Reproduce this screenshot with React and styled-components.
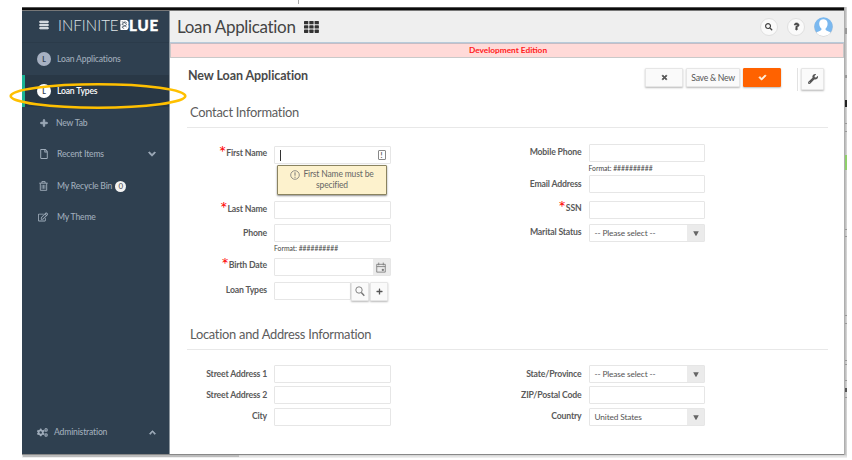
import React from "react";
import styled, { createGlobalStyle } from "styled-components";
import {
  FaBars, FaSearch, FaQuestion, FaTimes, FaCheck, FaWrench, FaPlus,
  FaChevronDown, FaChevronUp, FaRegFile, FaRegEdit, FaCogs,
} from "react-icons/fa";

const Global = createGlobalStyle`
  * { box-sizing: border-box; }
  body { margin: 0; background: #fff; font-family: Lato, sans-serif; color: #555; overflow: hidden; }
  svg { display: block; flex: none; overflow: visible; }
`;

const Page = styled.div`
  position: relative;
  width: 852px;
  height: 460px;
  padding: 7px 0 0 22px;
`;
const Backdrop = styled.div`
  position: absolute;
  left: 298px;
  top: 0;
  width: 1px;
  height: 4px;
  background: #aaa;
`;
const BackEdge = styled.div`
  position: absolute;
  left: 844px;
  top: 7px;
  width: 3px;
  height: 450px;
  background: linear-gradient(90deg, #a5a5a5, #dcdcdc);
  border-bottom: 2px solid #ddd;
  overflow: hidden;
`;
const Peek = styled.div`
  position: absolute;
  left: 1px;
  top: ${(p) => p.$y}px;
  width: 2px;
  height: ${(p) => p.$h || 1}px;
  background: ${(p) => p.$c || "#999"};
`;
const BackFloor = styled.div`
  position: absolute;
  left: 22px;
  top: 455px;
  width: 825px;
  height: 3px;
  background: linear-gradient(#d2d2d2, #f4f4f4);
  &::before {
    content: "";
    display: block;
    margin-left: 1px;
    width: 216px;
    height: 2px;
    background: #bcbcbc;
  }
`;
const Window = styled.div`
  position: relative;
  width: 822px;
  height: 448px;
  display: flex;
  flex-direction: column;
  border-bottom: 1px solid #888;
  background: #fff;
`;
const TopEdge = styled.div`
  height: 4px;
  background: #0b0b0b;
  border-top: 1px solid #555;
  border-bottom: 1px solid #777;
`;
const Columns = styled.div`
  display: flex;
  flex: 1;
`;

const Sidebar = styled.nav`
  width: 148px;
  display: flex;
  flex-direction: column;
  background: #2f4050;
  border-right: 1px solid #8d979f;
`;
const Brand = styled.div`
  height: 32px;
  display: flex;
  align-items: center;
  padding: 0 0 3px 17px;
  color: #dfe4e8;
  border-bottom: 1px solid #2b3b4a;
`;
const BrandLight = styled.span`
  margin-left: 9px;
  width: 61.5px;
  font-size: 15px;
  line-height: 18px;
  font-weight: 300;
  letter-spacing: 0.05px;
`;
const BrandHeavy = styled.span`
  margin-left: 0.5px;
  font-size: 15px;
  line-height: 18px;
  font-weight: 900;
  color: #fff;
  letter-spacing: 0.9px;
  -webkit-text-stroke: 0.4px #fff;
`;
const NavItem = styled.div`
  height: ${(p) => p.$h}px;
  display: flex;
  align-items: center;
  padding-left: ${(p) => (p.$active ? 12 : 15)}px;
  border-left: ${(p) => (p.$active ? "3px solid #1ab394" : "0")};
  background: ${(p) => (p.$active ? "#293846" : "transparent")};
  color: ${(p) => (p.$active ? "#fff" : "#a0adbb")};
  font-size: 8.6px;
  font-weight: ${(p) => (p.$active ? 600 : 500)};
  letter-spacing: -0.18px;
  margin-top: ${(p) => p.$mt || 0};
`;
const NavIcon = styled.span`
  width: ${(p) => p.$w || 20}px;
  display: flex;
  padding-left: ${(p) => p.$pad || 0}px;
`;
const Initial = styled.span`
  width: 14px;
  height: 14px;
  border-radius: 50%;
  display: grid;
  place-items: center;
  background: ${(p) => (p.$active ? "#fff" : "#a7b1c2")};
  color: #2f4050;
  font-size: 7px;
  line-height: 8px;
  font-weight: 700;
`;
const Count = styled.span`
  width: 11px;
  height: 11px;
  border-radius: 50%;
  margin-left: 3px;
  background: #f3f3f3;
  color: #5e5e5e;
  font-size: 8px;
  line-height: 11px;
  text-align: center;
`;
const Arrow = styled.span`
  margin-left: auto;
  padding-right: 13px;
`;

const Main = styled.main`
  flex: 1;
  display: flex;
  flex-direction: column;
  min-width: 0;
`;
const Header = styled.header`
  height: 32px;
  flex: none;
  display: flex;
  align-items: center;
  padding: 0 11px 0 7px;
  background: #efefef;
  border-bottom: 1px solid #b8cbda;
`;
const Title = styled.h1`
  margin: 0 8.5px 0 0;
  font-size: 17px;
  line-height: 22px;
  font-weight: 400;
  letter-spacing: -0.33px;
  color: #444;
  white-space: nowrap;
`;
const Tools = styled.div`
  margin-left: auto;
  display: flex;
  align-items: center;
  gap: 9px;
`;
const RoundButton = styled.span`
  width: 18px;
  height: 18px;
  display: grid;
  place-items: center;
  border-radius: 50%;
  background: #fafafa;
  border: 1px solid #e0e0e0;
  color: #444;
`;
const Edition = styled.div`
  height: 15px;
  flex: none;
  padding-left: 2px;
  background: #ffdad8;
  border: 1px solid #c9c9c9;
  border-top-color: #c5bcc4;
  color: #ff2020;
  font-size: 8.3px;
  line-height: 12px;
  font-weight: 700;
  text-align: center;
`;
const Content = styled.div`
  flex: 1;
  padding: 0 16px 0 17px;
`;
const ActionBar = styled.div`
  height: 43px;
  display: flex;
  align-items: flex-start;
  padding: 10px 4px 0 1px;
`;
const FormTitle = styled.h2`
  margin: 0 auto 0 0;
  font-size: 12.5px;
  line-height: 16px;
  font-weight: 700;
  letter-spacing: -0.08px;
  color: #4a4a4a;
`;
const Button = styled.button`
  width: ${(p) => p.$w}px;
  height: ${(p) => p.$h || 19}px;
  margin-left: ${(p) => p.$ml || 0}px;
  padding: 0;
  display: flex;
  align-items: center;
  justify-content: center;
  font: 8.7px/12px Lato, sans-serif;
  letter-spacing: -0.3px;
  white-space: nowrap;
  background: ${(p) => (p.$primary ? "#ff6200" : "#fafafa")};
  color: ${(p) => (p.$primary ? "#fff0dd" : "#555")};
  border: 1px solid ${(p) => (p.$primary ? "#ff6200" : "#e6e6e6")};
  border-radius: 1px;
  box-shadow: 0 1px 2px rgba(0, 0, 0, 0.28);
`;
const Divider = styled.span`
  width: 1px;
  height: 23px;
  margin-left: 16px;
  background: #e2e2e2;
`;
const SectionTitle = styled.h3`
  margin: 0;
  height: ${(p) => p.$h}px;
  padding: ${(p) => p.$pt}px 0 0 3px;
  font-size: 12.9px;
  line-height: 16px;
  font-weight: 400;
  letter-spacing: -0.27px;
  color: #5c5c5c;
  border-bottom: 1px solid #e8e8e8;
`;
const Fields = styled.div`
  display: grid;
  grid-template-columns: 314.5px 1fr;
  height: ${(p) => p.$h}px;
`;
const FieldColumn = styled.div`
  padding-top: ${(p) => p.$pt}px;
`;
const Row = styled.div`
  position: relative;
  height: 18px;
  margin-top: ${(p) => p.$gap || 0}px;
  display: flex;
`;
const Label = styled.label`
  width: 80px;
  margin-right: 7px;
  display: flex;
  justify-content: flex-end;
  font-size: 8.7px;
  line-height: 12px;
  letter-spacing: -0.17px;
  padding-top: ${(p) => p.$pt ?? 3}px;
  font-weight: 700;
  color: #5a5a5a;
  white-space: nowrap;
`;
const Star = styled.span`
  color: #f00;
  font-size: 18px;
  line-height: 16px;
  font-weight: 400;
  margin: -3px 0 0;
`;
const Box = styled.div`
  width: ${(p) => p.$w || 116.5}px;
  height: 18px;
  display: flex;
  align-items: center;
  justify-content: space-between;
  padding-left: 5px;
  border: 1px solid #e6e6e6;
  border-radius: 1px;
  background: #fff;
  font-size: 8.3px;
  letter-spacing: -0.13px;
  color: #555;
`;
const Caret = styled.span`
  width: 1px;
  height: 11px;
  background: #333;
`;
const Badge = styled.span`
  width: 8px;
  height: 10px;
  margin-right: 4px;
  display: grid;
  place-items: center;
  border: 1px solid #888;
  border-radius: 1px;
  font-size: 7px;
  line-height: 8px;
  font-weight: 700;
`;
const Addon = styled.span`
  width: 17px;
  height: 16px;
  display: grid;
  place-items: center;
  background: #ebebeb;
  color: #666;
`;
const Hint = styled.div`
  height: 8px;
  margin: 2px 0 0 87px;
  font-size: 6.8px;
  line-height: 8px;
  color: #444;
`;
const Warning = styled.div`
  position: absolute;
  left: 90px;
  top: 18.5px;
  width: 110px;
  height: 30px;
  padding-top: 4px;
  border: 1px solid #8a8360;
  border-radius: 1px;
  background: #fdf2cd;
  box-shadow: 0 1px 2px rgba(0, 0, 0, 0.45);
  font-size: 8.5px;
  line-height: 10.5px;
  letter-spacing: -0.15px;
  text-align: center;
  color: #666;
`;
const WarningLine = styled.div`
  display: flex;
  justify-content: center;
  align-items: center;
  gap: 3px;
  height: 10px;
`;
const Highlight = styled.svg`
  position: absolute;
  left: 9px;
  top: 82px;
`;

const KnotMark = () => (
  <svg width="9" height="10" viewBox="0 0 9 10">
    <path d="M.5 0h6Q9.4 1 8.4 4.8 9.4 8 7 10H.5Q-.2 7 .6 5Q-.2 3 .5 0Z" fill="#fff" />
    <path d="M1.8 1.8Q4 2 6.6 4.1M4.6 1.4l2.2 1.4M1.8 4.4Q4 5 6.6 7M1.8 7.2l2.4 1.4M2 7Q4.5 6.5 6.8 4.5M1.8 4.2L5 2" stroke="#2f4050" strokeWidth=".7" fill="none" />
  </svg>
);
const GridMark = () => (
  <svg width="15" height="12" viewBox="0 0 15 12" fill="#333">
    {[0, 4.3, 8.6].map((y) => [0, 5.3, 10.6].map((x) => (
      <rect key={`${x}-${y}`} x={x} y={y} width="4.3" height="3.3" rx=".6" />
    )))}
  </svg>
);
const Bin = () => (
  <svg width="9" height="10" viewBox="0 0 9 10" fill="none" stroke="currentColor">
    <path d="M.3 2.2h8.4M2.9 2V.6h3.2V2M1.3 2.4v6.9h6.4V2.4" strokeWidth=".95" />
    <path d="M3.1 3.8v4M4.5 3.8v4M5.9 3.8v4" strokeWidth=".8" />
  </svg>
);
const Avatar = () => (
  <svg width="19" height="20" viewBox="0 0 19 20">
    <circle cx="9.5" cy="10.2" r="9.3" fill="#c9c9c9" />
    <circle cx="9.5" cy="9.4" r="9.2" fill="#7ab8ef" />
    <path d="M5.2 6.4C5 .7 13.8.7 13.6 6.4c0 2.5-1 4-2 5.2-.3 1.4.2 1.8 1.8 2.4 1.7.5 2.6 1.1 3.1 1.7a9.2 9.2 0 0 1-14 0c.5-.7 1.6-1.2 3.2-1.7 1.5-.6 2-1 1.7-2.4-1.2-1.2-2.2-2.7-2.2-5.2Z" fill="#fff" />
  </svg>
);
const Calendar = () => (
  <svg width="10" height="11" viewBox="0 0 11 12" fill="none" stroke="#777" strokeWidth=".9">
    <path d="M.8 2.5h9.4v8.6H.8zM.8 5h9.4M3 .6v3M8 .6v3" />
    <path d="M6.8 8h1.4v1.2H6.8z" fill="#555" />
  </svg>
);
const Lens = () => (
  <svg width="10" height="11" viewBox="0 0 10 11" fill="none" stroke="#777">
    <circle cx="4" cy="4" r="3.2" strokeWidth=".9" />
    <path d="M6.3 6.5l3 3.3" strokeWidth="1.4" />
  </svg>
);
const Down = () => (
  <svg width="6" height="5" viewBox="0 0 6 5"><path d="M.2.3h5.6L3.4 4.7h-.8z" fill="#666" /></svg>
);
const Alert = () => (
  <svg width="10" height="10" viewBox="0 0 10 10" fill="none" stroke="#777">
    <circle cx="5" cy="5" r="4.3" strokeWidth=".8" />
    <path d="M5 2.3v3.4M5 6.7v1.1" strokeWidth="1" />
  </svg>
);
const heavy = { stroke: "currentColor", strokeWidth: 50 };

function Field({ label, required, gap, labelTop, children }) {
  return (
    <Row $gap={gap}>
      <Label $pt={labelTop}>{required && <Star>*</Star>}{label}</Label>
      {children || <Box />}
    </Row>
  );
}
const Select = ({ value }) => (
  <Box>{value}<Addon><Down /></Addon></Box>
);

const peeks = [
  { y: 21, h: 6 }, { y: 68, h: 3 }, { y: 93, h: 7, c: "#222" }, { y: 116 }, { y: 124 },
  { y: 148, h: 15, c: "#8fd06a" }, { y: 222 }, { y: 229 }, { y: 308 }, { y: 316 },
  { y: 353 }, { y: 357 }, { y: 373 }, { y: 381, h: 4, c: "#555" }, { y: 390 },
];

export default function App() {
  return (
    <Page>
      <Global />
      <Backdrop />
      <BackEdge>{peeks.map((p) => <Peek key={p.y} $y={p.y} $h={p.h} $c={p.c} />)}</BackEdge>
      <BackFloor />
      <Window>
        <TopEdge />
        <Columns>
          <Sidebar>
            <Brand>
              <FaBars size={10} {...heavy} />
              <BrandLight>INFINITE</BrandLight>
              <KnotMark />
              <BrandHeavy>LUE</BrandHeavy>
            </Brand>
            <NavItem $h={32}><NavIcon><Initial>L</Initial></NavIcon>Loan Applications</NavItem>
            <NavItem $h={32} $active><NavIcon><Initial $active>L</Initial></NavIcon>Loan Types</NavItem>
            <NavItem $h={31}><NavIcon $w={19} $pad={2.5}><FaPlus size={8} {...heavy} /></NavIcon>New Tab</NavItem>
            <NavItem $h={32}>
              <NavIcon $pad={2}><FaRegFile size={10} /></NavIcon>Recent Items
              <Arrow><FaChevronDown size={8} {...heavy} /></Arrow>
            </NavItem>
            <NavItem $h={32}><NavIcon $pad={2}><Bin /></NavIcon>My Recycle Bin<Count>0</Count></NavItem>
            <NavItem $h={30}><NavIcon $pad={1}><FaRegEdit size={10} /></NavIcon>My Theme</NavItem>
            <NavItem $h={44} $mt="auto">
              <NavIcon $w={17}><FaCogs size={11} /></NavIcon>Administration
              <Arrow><FaChevronUp size={7} {...heavy} /></Arrow>
            </NavItem>
          </Sidebar>
          <Main>
            <Header>
              <Title>Loan Application</Title>
              <GridMark />
              <Tools>
                <RoundButton><FaSearch size={7.5} /></RoundButton>
                <RoundButton><FaQuestion size={7} {...heavy} /></RoundButton>
                <Avatar />
              </Tools>
            </Header>
            <Edition>Development Edition</Edition>
            <Content>
              <ActionBar>
                <FormTitle>New Loan Application</FormTitle>
                <Button $w={38}><FaTimes size={7} {...heavy} /></Button>
                <Button $w={54} $ml={3}>Save &amp; New</Button>
                <Button $w={38} $ml={3} $primary><FaCheck size={7} {...heavy} /></Button>
                <Divider />
                <Button $w={23} $h={22} $ml={3}><FaWrench size={10} /></Button>
              </ActionBar>
              <SectionTitle $h={27} $pt={3}>Contact Information</SectionTitle>
              <Fields $h={194}>
                <FieldColumn $pt={18}>
                  <Row>
                    <Label $pt={1}><Star>*</Star>First Name</Label>
                    <Box><Caret /><Badge>!</Badge></Box>
                    <Warning>
                      <WarningLine><Alert />First Name must be</WarningLine>
                      specified
                    </Warning>
                  </Row>
                  <Field label="Last Name" required gap={37} labelTop={2} />
                  <Field label="Phone" gap={5} />
                  <Hint>Format: ##########</Hint>
                  <Field label="Birth Date" required gap={6} labelTop={1} >
                    <Box><span /><Addon><Calendar /></Addon></Box>
                  </Field>
                  <Field label="Loan Types" gap={6} labelTop={2}>
                    <Box $w={77} />
                    <Button $w={18}><Lens /></Button>
                    <Button $w={18} $ml={1}><FaPlus size={7} /></Button>
                  </Field>
                </FieldColumn>
                <FieldColumn $pt={16}>
                  <Field label="Mobile Phone" labelTop={2} />
                  <Hint>Format: ##########</Hint>
                  <Field label="Email Address" gap={3} />
                  <Field label="SSN" required gap={8} labelTop={1} />
                  <Field label="Marital Status" gap={5} labelTop={2}><Select value="-- Please select --" /></Field>
                </FieldColumn>
              </Fields>
              <SectionTitle $h={28} $pt={4}>Location and Address Information</SectionTitle>
              <Fields $h={98}>
                <FieldColumn $pt={15}>
                  <Field label="Street Address 1" />
                  <Field label="Street Address 2" gap={3} />
                  <Field label="City" gap={4} labelTop={2} />
                </FieldColumn>
                <FieldColumn $pt={15}>
                  <Field label="State/Province"><Select value="-- Please select --" /></Field>
                  <Field label="ZIP/Postal Code" gap={3} />
                  <Field label="Country" gap={4} labelTop={2}><Select value="United States" /></Field>
                </FieldColumn>
              </Fields>
            </Content>
          </Main>
        </Columns>
      </Window>
      <Highlight width="178" height="28" viewBox="0 0 178 28" fill="none">
        <ellipse cx="89" cy="14" rx="87.3" ry="11.7" stroke="#ffc000" strokeWidth="2.6" />
      </Highlight>
    </Page>
  );
}
